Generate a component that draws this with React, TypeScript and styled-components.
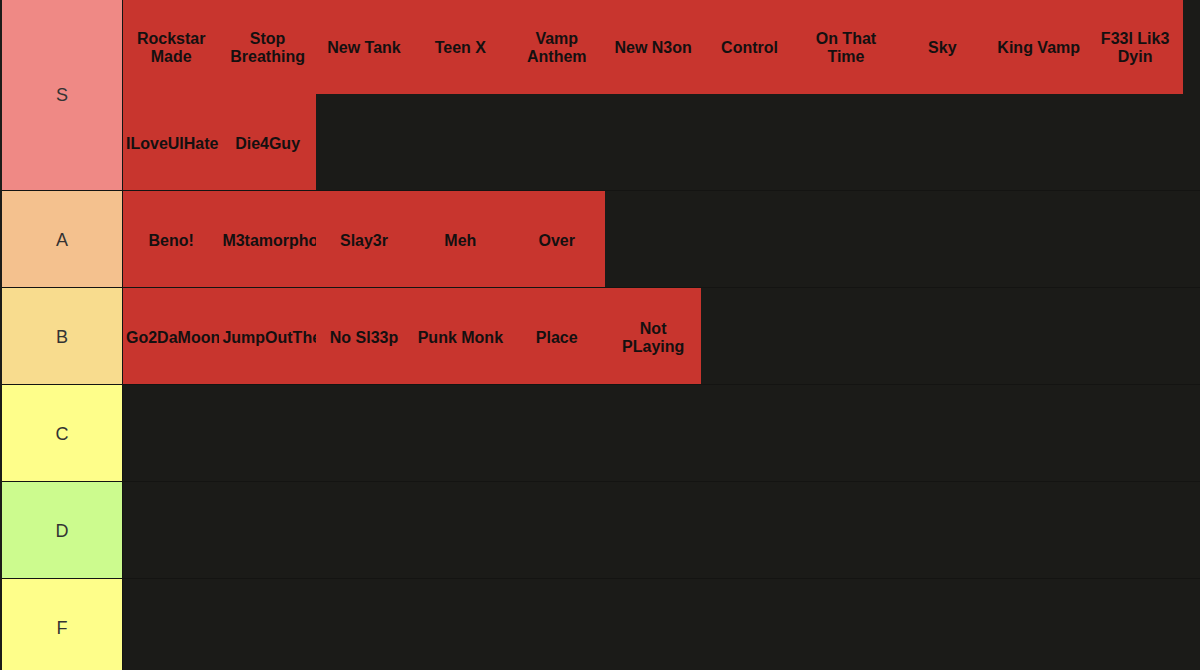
import React from "react";
import styled, { createGlobalStyle } from "styled-components";

const Global = createGlobalStyle`
  html, body {
    margin: 0;
    padding: 0;
    background: #1b1b18;
    overflow: hidden;
  }
  body {
    font-family: "Liberation Sans", Arial, Helvetica, sans-serif;
  }
  * { box-sizing: border-box; }
`;

const Board = styled.div`
  width: 1200px;
  height: 670px;
  overflow: hidden;
  background: #1b1b18;
`;

const List = styled.div`
  display: flex;
  flex-direction: column;
  margin-top: -2px;
  padding-left: 2px;
`;

const Row = styled.div`
  display: flex;
  border-bottom: 1px solid #141412;
`;

const Label = styled.div<{ $bg: string }>`
  width: 121px;
  flex: none;
  background: ${(p) => p.$bg};
  border-right: 1px solid #141412;
  display: flex;
  align-items: center;
  justify-content: center;
  padding-top: 2px;
  font-size: 18px;
  color: #333;
  min-height: 96px;
`;

const Items = styled.div`
  display: flex;
  flex-wrap: wrap;
  align-content: flex-start;
  width: 1062px;
  flex: none;
`;

const Item = styled.div`
  width: 96.4px;
  height: 96px;
  flex: none;
  background: #c8352e;
  display: flex;
  align-items: center;
  padding-top: 3px;
  overflow: hidden;
  font-weight: bold;
  font-size: 16px;
  line-height: 18px;
  color: #141010;
`;

const ItemText = styled.div<{ $single?: boolean }>`
  width: 100%;
  padding: 0 3px;
  text-align: center;
  overflow: hidden;
  white-space: ${(p) => (p.$single ? "nowrap" : "normal")};
`;

const tiers: { label: string; bg: string; items: string[] }[] = [
  {
    label: "S",
    bg: "#ef8985",
    items: [
      "Rockstar Made",
      "Stop Breathing",
      "New Tank",
      "Teen X",
      "Vamp Anthem",
      "New N3on",
      "Control",
      "On That Time",
      "Sky",
      "King Vamp",
      "F33l Lik3 Dyin",
      "ILoveUIHate",
      "Die4Guy",
    ],
  },
  {
    label: "A",
    bg: "#f4c18e",
    items: ["Beno!", "M3tamorphosis", "Slay3r", "Meh", "Over"],
  },
  {
    label: "B",
    bg: "#f8dc8e",
    items: ["Go2DaMoon", "JumpOutTheHouse", "No Sl33p", "Punk Monk", "Place", "Not PLaying"],
  },
  { label: "C", bg: "#fefe8a", items: [] },
  { label: "D", bg: "#ccfb8e", items: [] },
  { label: "F", bg: "#fefe8a", items: [] },
];

export default function App() {
  return (
    <Board>
      <Global />
      <List>
        {tiers.map((t) => (
          <Row key={t.label}>
            <Label $bg={t.bg}>{t.label}</Label>
            <Items>
              {t.items.map((it) => (
                <Item key={it}>
                  <ItemText $single={!it.includes(" ")}>{it}</ItemText>
                </Item>
              ))}
            </Items>
          </Row>
        ))}
      </List>
    </Board>
  );
}
